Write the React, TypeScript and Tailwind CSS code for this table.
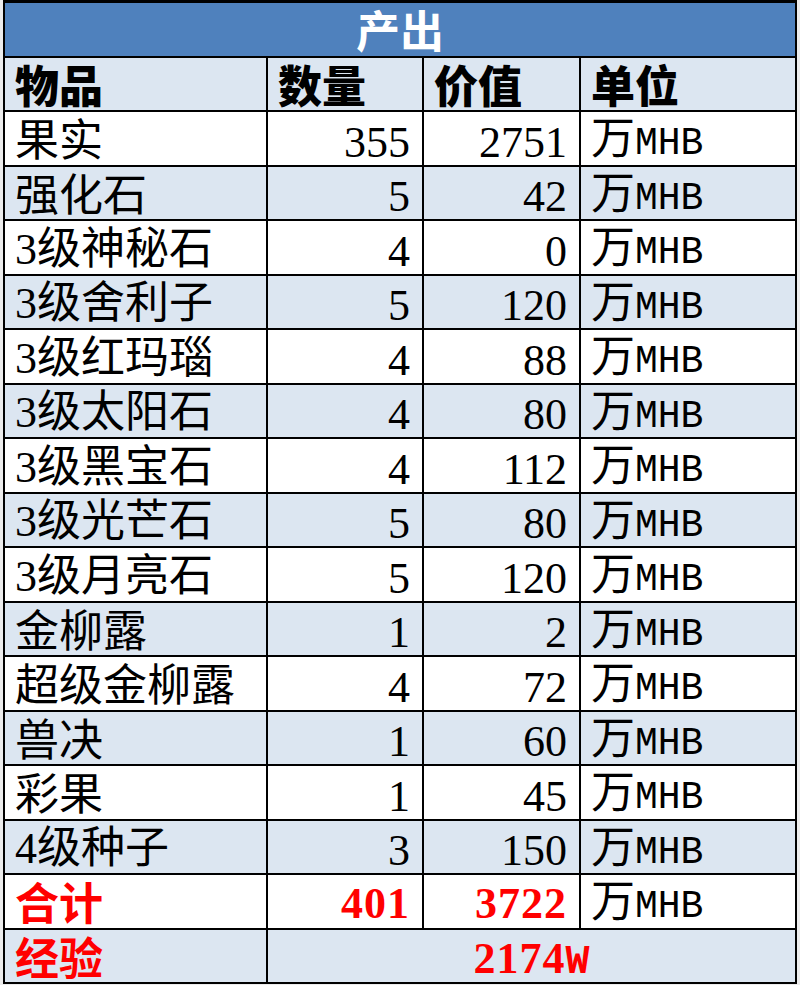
import React from "react";

type Row = { name: string; qty: string; val: string; light: boolean };

const rows: Row[] = [
  { name: "果实", qty: "355", val: "2751", light: false },
  { name: "强化石", qty: "5", val: "42", light: true },
  { name: "3级神秘石", qty: "4", val: "0", light: false },
  { name: "3级舍利子", qty: "5", val: "120", light: true },
  { name: "3级红玛瑙", qty: "4", val: "88", light: false },
  { name: "3级太阳石", qty: "4", val: "80", light: true },
  { name: "3级黑宝石", qty: "4", val: "112", light: false },
  { name: "3级光芒石", qty: "5", val: "80", light: true },
  { name: "3级月亮石", qty: "5", val: "120", light: false },
  { name: "金柳露", qty: "1", val: "2", light: true },
  { name: "超级金柳露", qty: "4", val: "72", light: false },
  { name: "兽决", qty: "1", val: "60", light: true },
  { name: "彩果", qty: "1", val: "45", light: false },
  { name: "4级种子", qty: "3", val: "150", light: true },
];

function Txt({ s }: { s: string }) {
  const parts = s.match(/[0-9]+|[A-Za-z]+|[^0-9A-Za-z]+/g) || [];
  return (
    <span className="whitespace-nowrap">
      {parts.map((p, i) =>
        /^[0-9]+$/.test(p) ? (
          <span key={i} className="font-['Liberation_Serif',serif]">
            {p}
          </span>
        ) : /^[A-Za-z]+$/.test(p) ? (
          <span key={i} className="font-['Liberation_Mono',monospace] text-[38px]">
            {p}
          </span>
        ) : (
          <span key={i} className="font-['Noto_Sans_CJK_SC',sans-serif]">
            {p}
          </span>
        )
      )}
    </span>
  );
}

const cellBase =
  "h-[54.5px] border-r-2 border-b-2 border-black flex items-center whitespace-nowrap text-[44px] leading-[1.1]";

export default function App() {
  return (
    <div className="w-[800px] h-[985px] bg-[#ececec] pl-[3px] overflow-hidden">
      <div className="w-[794px] border-l-2 border-t-[3px] border-black grid grid-cols-[263px_156px_157px_216px] text-black">
        <div className={`${cellBase} col-span-4 bg-[#4f81bd] justify-center text-white font-bold font-['Noto_Sans_CJK_SC',sans-serif]`}>
          产出
        </div>
        {["物品", "数量", "价值", "单位"].map((h) => (
          <div
            key={h}
            className={`${cellBase} bg-[#dce6f1] pl-[10px] font-black font-['Noto_Sans_CJK_SC',sans-serif]`}
          >
            {h}
          </div>
        ))}
        {rows.map((r) => {
          const bg = r.light ? "bg-[#dce6f1]" : "bg-white";
          return (
            <React.Fragment key={r.name}>
              <div className={`${cellBase} ${bg} pl-[10px]`}>
                <Txt s={r.name} />
              </div>
              <div className={`${cellBase} ${bg} justify-end pr-[12px] pt-[6px]`}>
                <Txt s={r.qty} />
              </div>
              <div className={`${cellBase} ${bg} justify-end pr-[12px] pt-[6px]`}>
                <Txt s={r.val} />
              </div>
              <div className={`${cellBase} ${bg} pl-[10px]`}>
                <Txt s="万MHB" />
              </div>
            </React.Fragment>
          );
        })}
        <div className={`${cellBase} bg-white pl-[10px] text-[#ff0000] font-bold`}>
          <span className="font-['Noto_Sans_CJK_SC',sans-serif]">合计</span>
        </div>
        <div className={`${cellBase} bg-white justify-end pr-[12px] pt-[6px] text-[#ff0000] font-bold`}>
          <span className="font-['Liberation_Serif',serif] tracking-[1px]">401</span>
        </div>
        <div className={`${cellBase} bg-white justify-end pr-[12px] pt-[6px] text-[#ff0000] font-bold`}>
          <span className="font-['Liberation_Serif',serif] tracking-[1px]">3722</span>
        </div>
        <div className={`${cellBase} bg-white pl-[10px]`}>
          <Txt s="万MHB" />
        </div>
        <div className={`${cellBase} bg-[#dce6f1] pl-[10px] text-[#ff0000] font-bold`}>
          <span className="font-['Noto_Sans_CJK_SC',sans-serif]">经验</span>
        </div>
        <div className={`${cellBase} col-span-3 bg-[#dce6f1] justify-center pt-[6px] text-[#ff0000] font-bold`}>
          <span className="whitespace-nowrap">
            <span className="font-['Liberation_Serif',serif] tracking-[1px]">2174</span>
            <span className="font-['Liberation_Mono',monospace] text-[40px]">W</span>
          </span>
        </div>
      </div>
    </div>
  );
}
